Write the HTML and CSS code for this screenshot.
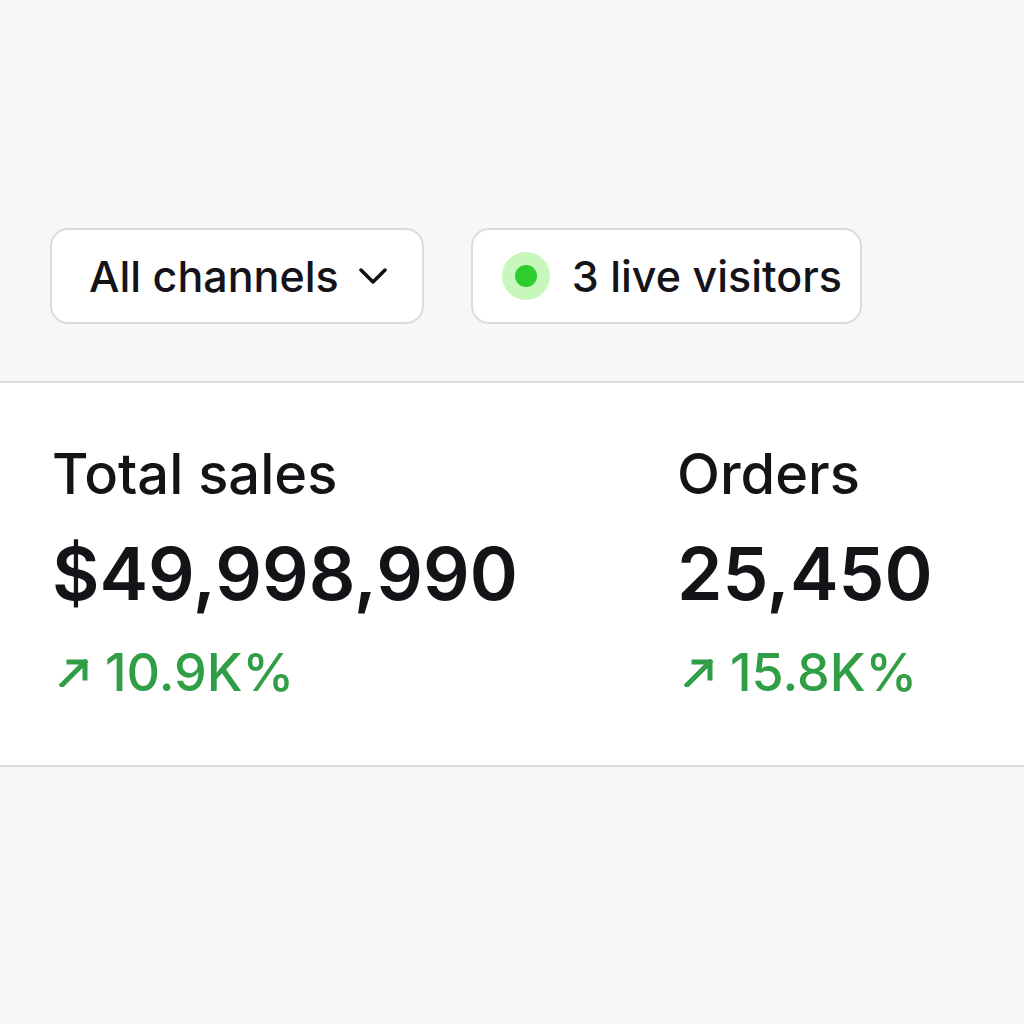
FILE: index.html
```html
<!DOCTYPE html>
<html lang="en">
<head>
    <meta charset="UTF-8">
    <meta name="viewport" content="width=device-width, initial-scale=1.0">
    <title>Sales overview</title>
    <link rel="stylesheet" href="styles.css">
</head>
<body>
    <div class="toolbar">
        <button class="pill">
            <span>All channels</span>
            <svg class="chevron" viewBox="0 0 28 17" width="28" height="17">
                <path d="M2 2 L14 14 L26 2" fill="none" stroke="#111" stroke-width="3.5" stroke-linecap="round" stroke-linejoin="round"/>
            </svg>
        </button>
        <button class="pill pill-live">
            <span class="live-dot"></span>
            <span>3 live visitors</span>
        </button>
    </div>

    <div class="metrics">
        <div class="metric">
            <div class="metric-label">Total sales</div>
            <div class="metric-value">$49,998,990</div>
            <div class="metric-change">
                <svg class="arrow" viewBox="0 0 30 28" width="30" height="28">
                    <path d="M3 26 L26 3 M10 3 H26 V19" fill="none" stroke="#2f9e44" stroke-width="5" stroke-linecap="square"/>
                </svg>
                <span>10.9K%</span>
            </div>
        </div>
        <div class="metric">
            <div class="metric-label">Orders</div>
            <div class="metric-value">25,450</div>
            <div class="metric-change">
                <svg class="arrow" viewBox="0 0 30 28" width="30" height="28">
                    <path d="M3 26 L26 3 M10 3 H26 V19" fill="none" stroke="#2f9e44" stroke-width="5" stroke-linecap="square"/>
                </svg>
                <span>15.8K%</span>
            </div>
        </div>
    </div>
</body>
</html>
```

FILE: styles.css
```css
body {
    margin: 0;
    background-color: #f7f7f7;
    font-family: Inter, "Noto Sans", sans-serif;
    color: #141418;
}
.toolbar {
    display: flex;
    gap: 47px;
    padding: 228px 0 57px 50px;
}
.pill {
    display: flex;
    align-items: center;
    height: 96px;
    box-sizing: border-box;
    padding: 0 35px 0 37px;
    gap: 20px;
    background: #fff;
    border: 2px solid #dcdcdc;
    border-radius: 18px;
    font-family: inherit;
    font-size: 43px;
    font-weight: 500;
    color: #141418;
}
.pill-live {
    padding: 0 18px 0 29px;
    gap: 22px;
}
.live-dot {
    width: 22px;
    height: 22px;
    border-radius: 50%;
    background: #2ecc2e;
    border: 13px solid #c8f7bd;
}
.metrics {
    display: grid;
    grid-template-columns: 625px 1fr;
    height: 382px;
    padding: 0 0 0 52px;
    background: #fff;
    border-top: 2px solid #dcdcdc;
    border-bottom: 2px solid #dcdcdc;
}
.metric {
    padding-top: 61px;
}
.metric-label {
    font-size: 56px;
    font-weight: 500;
    line-height: 60px;
}
.metric-value {
    margin-top: 27px;
    font-size: 73px;
    font-weight: 600;
    line-height: 86px;
}
.metric-change {
    display: flex;
    align-items: center;
    gap: 16px;
    margin-top: 26px;
    padding-left: 7px;
    color: #2f9e44;
    font-size: 52px;
    font-weight: 500;
    line-height: 60px;
}
```
